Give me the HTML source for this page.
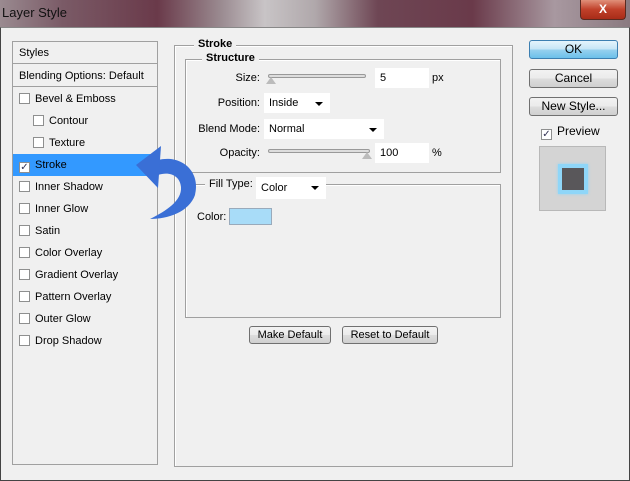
<!DOCTYPE html>
<html><head><style>
*{margin:0;padding:0;box-sizing:border-box}
body{width:630px;height:481px;overflow:hidden;font-family:"Liberation Sans",Tahoma,sans-serif;font-size:11px;color:#000;position:relative;background:#f0f0f0}
.title{position:absolute;left:0;top:0;width:630px;height:27px;background:linear-gradient(90deg,#9a8a90 0%,#7a5a66 10%,#6a3a4a 25%,#9a8a90 35%,#c8c4c6 42%,#b0a8ab 50%,#6e4654 60%,#6a3a4a 75%,#a898a0 88%,#8a7a80 100%)}
.title span{position:absolute;left:2px;top:5px;font-size:13px;color:#111}
.close{position:absolute;left:580px;top:0;width:46px;height:20px;border:1px solid #5a2a20;border-top:none;border-radius:0 0 4px 4px;background:linear-gradient(#e0907a,#c0402a 50%,#a82c18);color:#fff;font-weight:bold;text-align:center;font-size:12px;line-height:18px}
.win{position:absolute;left:0;top:27px;width:630px;height:454px;border:1px solid #444;border-top:1px solid #888;background:#f0f0f0}
.abs{position:absolute}
.list{left:12px;top:41px;width:146px;height:424px;border:1px solid #a0a0a0;background:#f0f0f0}
.row{position:absolute;left:0;width:144px;height:22px;line-height:22px;padding-left:6px}
.sep{border-bottom:1px solid #a0a0a0}
.cb{display:inline-block;width:11px;height:11px;border:1px solid #8e8f8f;background:#fff;vertical-align:-2px;margin-right:5px}
.sel{background:#3399ff;color:#000}
.grp{border:1px solid #a0a0a0;box-shadow:1px 1px 0 #fff inset}
.lbl{position:absolute;background:#f0f0f0;padding:0 4px;font-weight:bold}
.inp{position:absolute;background:#fff;border:1px solid #fff;height:20px;line-height:18px;padding-left:4px}
.dd::after{content:"";position:absolute;right:6px;top:8px;border:4px solid transparent;border-top:4px solid #000;border-bottom:none}
.btn{position:absolute;border:1px solid #707070;border-radius:3px;background:linear-gradient(#f2f2f2,#ebebeb 50%,#dddddd 51%,#cfcfcf);text-align:center;font-size:12px}
.track{position:absolute;height:4px;border:1px solid #999;background:#ddd;border-radius:2px}
</style></head><body>
<div class="title"><span>Layer Style</span><div class="close">X</div></div>
<div class="win"></div>
<div class="abs list">
<div class="row sep" style="top:0">Styles</div>
<div class="row sep" style="top:23px">Blending Options: Default</div>
<div class="row" style="top:46px"><span class="cb"></span>Bevel &amp; Emboss</div>
<div class="row" style="top:68px;padding-left:20px"><span class="cb"></span>Contour</div>
<div class="row" style="top:90px;padding-left:20px"><span class="cb"></span>Texture</div>
<div class="row sel" style="top:112px"><span class="cb" style="text-align:center;line-height:9px;font-size:10px;color:#335">✓</span>Stroke</div>
<div class="row" style="top:134px"><span class="cb"></span>Inner Shadow</div>
<div class="row" style="top:156px"><span class="cb"></span>Inner Glow</div>
<div class="row" style="top:178px"><span class="cb"></span>Satin</div>
<div class="row" style="top:200px"><span class="cb"></span>Color Overlay</div>
<div class="row" style="top:222px"><span class="cb"></span>Gradient Overlay</div>
<div class="row" style="top:244px"><span class="cb"></span>Pattern Overlay</div>
<div class="row" style="top:266px"><span class="cb"></span>Outer Glow</div>
<div class="row" style="top:288px"><span class="cb"></span>Drop Shadow</div>
</div>
<div class="abs grp" style="left:174px;top:45px;width:339px;height:422px"></div>
<div class="lbl" style="left:194px;top:38px">Stroke</div>
<div class="abs grp" style="left:185px;top:59px;width:316px;height:114px"></div>
<div class="lbl" style="left:202px;top:52px">Structure</div>
<div class="abs" style="left:230px;top:72px;text-align:right;width:30px">Size:</div>
<div class="track" style="left:268px;top:74px;width:98px"></div>
<div class="abs" style="left:266px;top:72px;width:0;height:0;border:5px solid transparent;border-bottom:7px solid #bbb"></div>
<div class="inp" style="left:375px;top:68px;width:54px">5</div>
<div class="abs" style="left:432px;top:72px">px</div>
<div class="abs" style="left:200px;top:97px;text-align:right;width:60px">Position:</div>
<div class="inp dd" style="left:264px;top:93px;width:66px">Inside</div>
<div class="abs" style="left:190px;top:123px;text-align:right;width:70px">Blend Mode:</div>
<div class="inp dd" style="left:264px;top:119px;width:120px">Normal</div>
<div class="abs" style="left:200px;top:147px;text-align:right;width:60px">Opacity:</div>
<div class="track" style="left:268px;top:149px;width:102px"></div>
<div class="abs" style="left:362px;top:147px;width:0;height:0;border:5px solid transparent;border-bottom:7px solid #bbb"></div>
<div class="inp" style="left:375px;top:143px;width:54px">100</div>
<div class="abs" style="left:432px;top:147px">%</div>
<div class="abs grp" style="left:185px;top:184px;width:316px;height:134px"></div>
<div class="abs" style="left:205px;top:178px;background:#f0f0f0;padding:0 4px;height:14px">Fill Type:</div>
<div class="inp dd" style="left:256px;top:177px;width:70px;height:22px;line-height:20px">Color</div>
<div class="abs" style="left:197px;top:211px">Color:</div>
<div class="abs" style="left:229px;top:208px;width:43px;height:17px;background:#a8dcf8;border:1px solid #9ab"></div>
<div class="btn" style="left:249px;top:326px;width:82px;height:18px;line-height:16px;font-size:11px">Make Default</div>
<div class="btn" style="left:342px;top:326px;width:96px;height:18px;line-height:16px;font-size:11px">Reset to Default</div>
<div class="btn" style="left:529px;top:40px;width:89px;height:19px;line-height:17px;border-color:#3c7fb1;background:linear-gradient(#e5f4fc,#c4e5f6 50%,#98d1ef 51%,#6cc0ea)">OK</div>
<div class="btn" style="left:529px;top:69px;width:89px;height:19px;line-height:17px">Cancel</div>
<div class="btn" style="left:529px;top:97px;width:89px;height:19px;line-height:17px">New Style...</div>
<div class="abs" style="left:541px;top:124px;font-size:12px"><span class="cb" style="text-align:center;line-height:9px;font-size:10px;color:#335">✓</span>Preview</div>
<div class="abs" style="left:539px;top:146px;width:67px;height:65px;background:#d4d4d4;border:1px solid #b8b8b8"></div>
<div class="abs" style="left:558px;top:164px;width:30px;height:30px;background:#59575a;border:4px solid #8fd6f8;box-shadow:0 0 3px #8fd6f8"></div>
<svg class="abs" style="left:0;top:0" width="630" height="481">
<path d="M158 160 C182 154,201 172,195 195 C189 212,168 219,150 219 C166 211,182 201,181 187 C180 176,170 171,158 175 Z" fill="#3a6fd6"/>
<path d="M136 165 L161 146 L158 188 Z" fill="#3a6fd6"/>
</svg>
</body></html>
